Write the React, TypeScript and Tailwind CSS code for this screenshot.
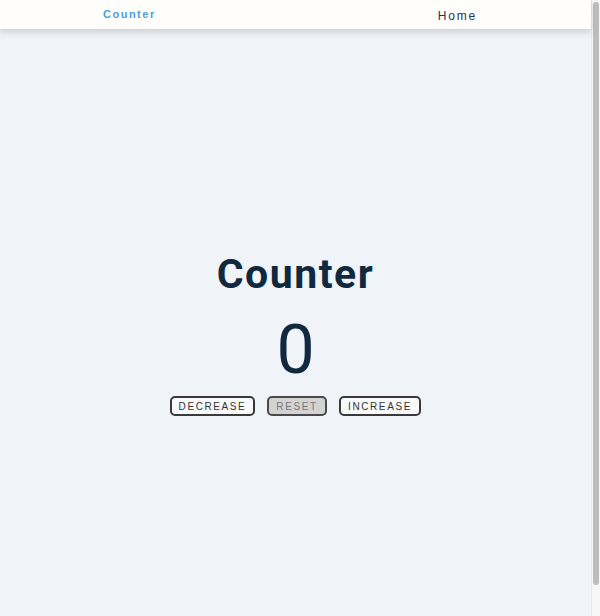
export default function App() {
  return (
    <div className="flex h-[616px] w-[600px] overflow-hidden bg-[#f0f4f8]">
      {/* Page */}
      <div className="flex w-[591px] flex-col">
        <header className="relative z-10 flex h-[29px] items-center bg-[#fffefd] shadow-[0_3px_6px_rgba(100,110,125,0.28)]">
          <div className="flex w-full items-center justify-between pl-[103px] pr-[114px]">
            <span className="font-['Liberation_Sans',Arial,sans-serif] text-[11px] font-bold tracking-[1.5px] text-[#4a9fd8]">
              Counter
            </span>
            <span className="pt-[2px] font-['Liberation_Sans',Arial,sans-serif] text-[12px] tracking-[1.8px] text-[#1c3550]">
              Home
            </span>
          </div>
        </header>

        <main className="flex flex-col items-center pt-[221px]">
          <h1 className="font-['Roboto',sans-serif] text-[41px] font-bold leading-[48px] tracking-[1.5px] text-[#11293f]">
            Counter
          </h1>
          <div className="mt-[17px] font-['Roboto',sans-serif] text-[68px] leading-[70px] text-[#11293f]">
            0
          </div>
          <div className="mt-[11px] flex gap-[12px] font-['Liberation_Sans',Arial,sans-serif] text-[10px] tracking-[1.6px]">
            <button className="h-[20px] w-[85px] rounded-[5px] border-2 border-[#3a3a3a] bg-[#f7f9fb] text-[#333]">
              DECREASE
            </button>
            <button className="h-[20px] w-[60px] rounded-[5px] border-2 border-[#4a4a4a] bg-[#d3d3d3] text-[#777]">
              RESET
            </button>
            <button className="h-[20px] w-[82px] rounded-[5px] border-2 border-[#3a3a3a] bg-[#f7f9fb] text-[#333]">
              INCREASE
            </button>
          </div>
        </main>
      </div>

      {/* Scrollbar */}
      <div className="flex w-[9px] flex-col border-l border-[#e8e8e8] bg-[#f7f7f7] px-[1px] pt-[2px]">
        <div className="h-[583px] w-[6px] rounded-full bg-[#bdbdbd]" />
      </div>
    </div>
  );
}
